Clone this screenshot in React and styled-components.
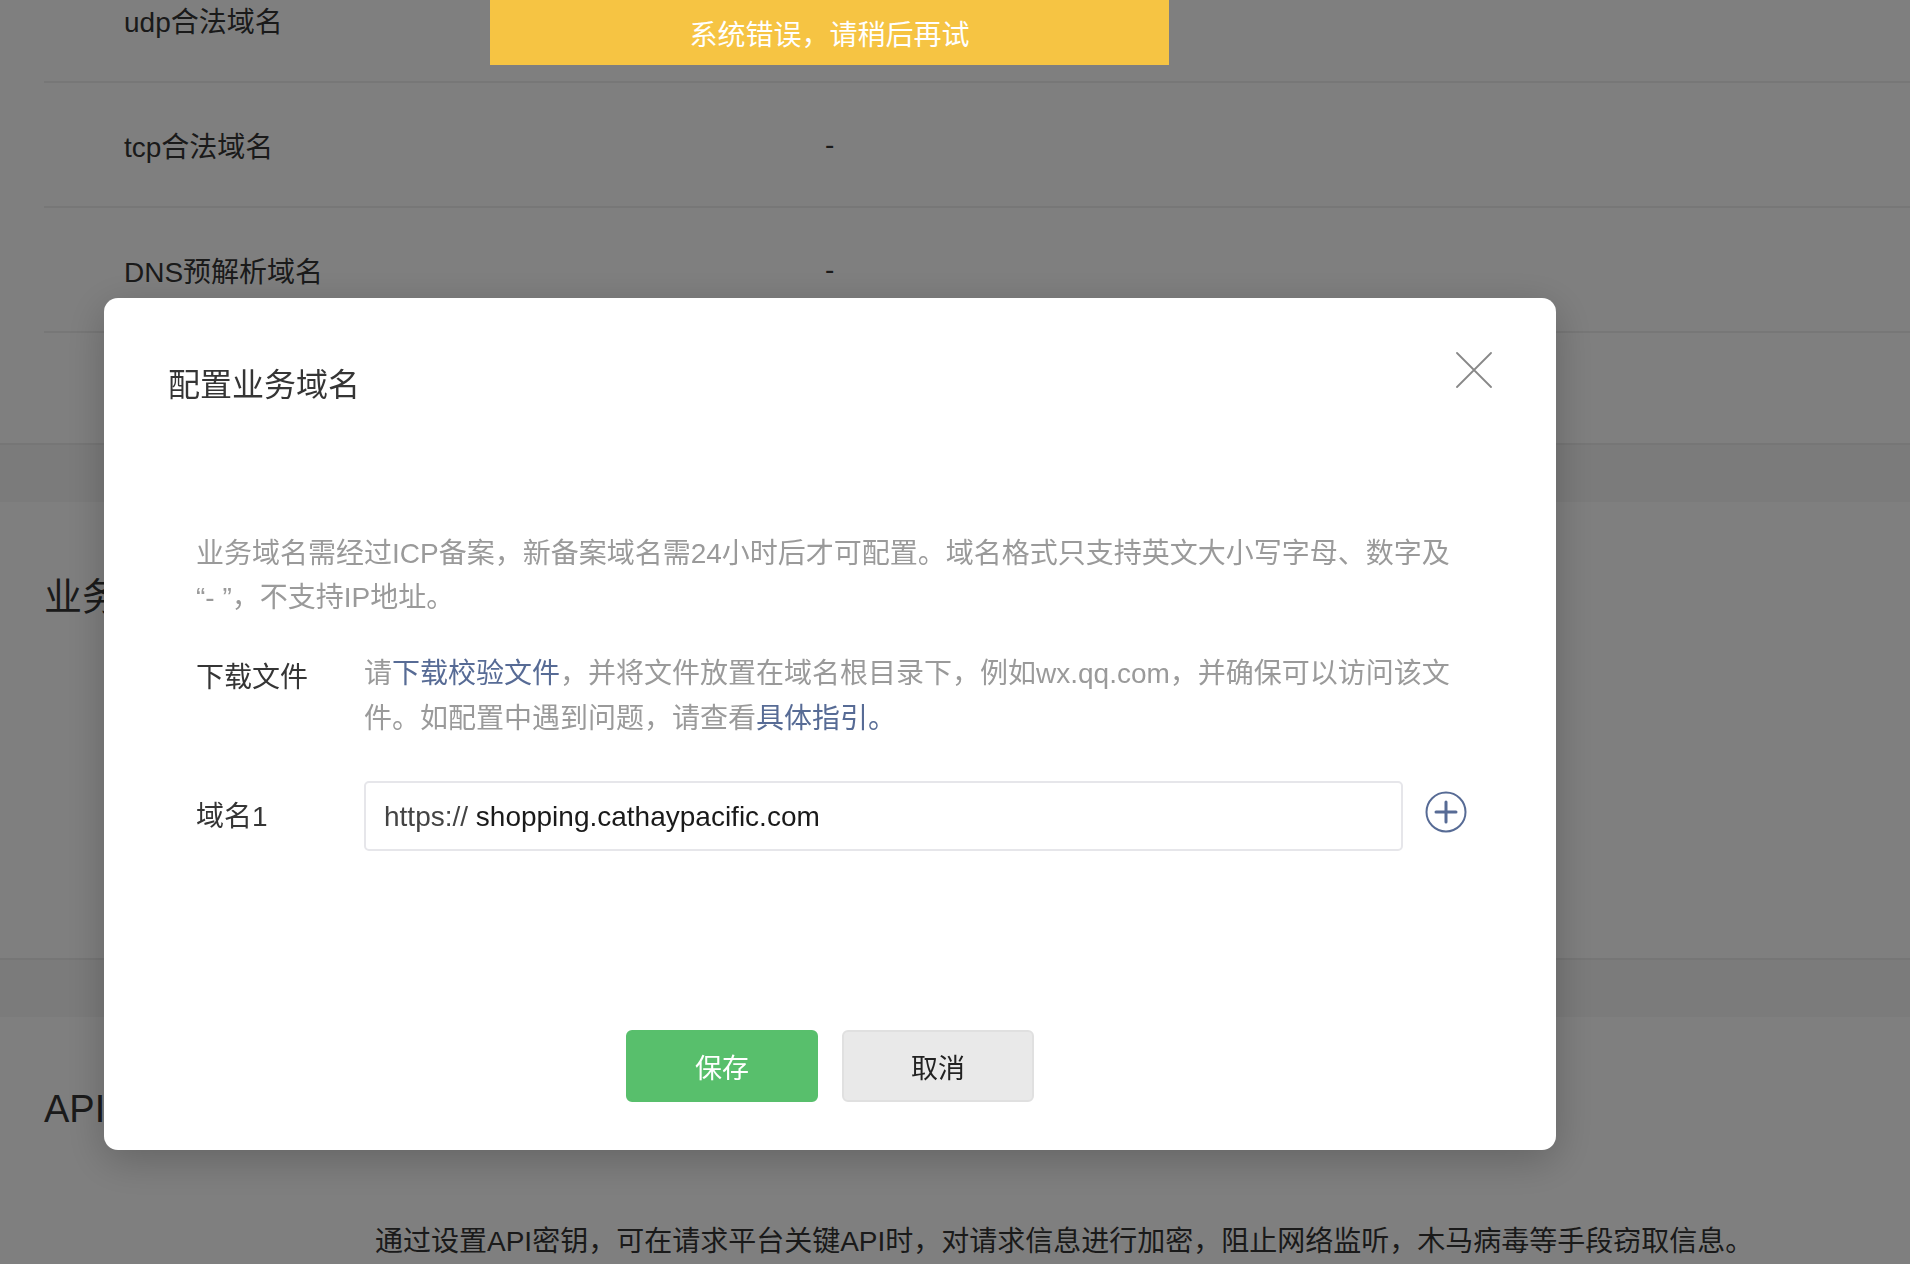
import React from "react";
import styled, { createGlobalStyle } from "styled-components";

const GlobalStyle = createGlobalStyle`
  html, body {
    margin: 0;
    padding: 0;
  }
  body {
    background: #f6f6f6;
    font-family: "Liberation Sans", "Noto Sans CJK SC", sans-serif;
    color: #353535;
    overflow: hidden;
  }
`;

const FONT = `"Liberation Sans", "Noto Sans CJK SC", sans-serif`;

/* page behind the dialog, scrolled down a bit */

const Page = styled.div`
  margin-top: -42px;
  min-height: 1320px;
`;

const Card = styled.section`
  background: #ffffff;
  border-bottom: 2px solid #ececec;
  margin-bottom: ${(p) => p.$gap || 0}px;
  min-height: ${(p) => p.$height || 0}px;
  box-sizing: border-box;
`;

const InfoRow = styled.div`
  display: flex;
  align-items: center;
  height: ${(p) => (p.$last ? 110 : 125)}px;
  margin-left: 44px;
  padding-left: 80px;
  border-bottom: ${(p) => (p.$last ? "none" : "2px solid #eeeeee")};
  box-sizing: border-box;
  font-size: 28px;
`;

const RowLabel = styled.div`
  width: 701px;
  color: #353535;
`;

const RowValue = styled.div`
  color: #353535;
`;

const SectionTitle = styled.h2`
  margin: 0;
  padding: ${(p) => p.$top}px 0 0 44px;
  font-size: 38px;
  line-height: 52px;
  font-weight: 400;
  color: #353535;
`;

const SectionDesc = styled.p`
  margin: 0;
  padding: 87px 0 0 375px;
  font-size: 28px;
  line-height: 40px;
  color: #353535;
`;

/* dialog */

const Mask = styled.div`
  position: fixed;
  inset: 0;
  background: rgba(0, 0, 0, 0.5);
  z-index: 10;
`;

const Dialog = styled.div`
  position: absolute;
  left: 104px;
  top: 298px;
  width: 1452px;
  height: 852px;
  background: #ffffff;
  border-radius: 14px;
  box-shadow: 0 10px 40px rgba(0, 0, 0, 0.22);
  display: flex;
  flex-direction: column;
  box-sizing: border-box;
  padding-bottom: 48px;
`;

const DialogHead = styled.div`
  display: flex;
  justify-content: space-between;
  align-items: flex-start;
  padding: 54px 64px 0;
`;

const DialogTitle = styled.h3`
  margin: 11px 0 0;
  font-size: 32px;
  line-height: 44px;
  font-weight: 400;
  color: #353535;
`;

const CloseButton = styled.button`
  width: 36px;
  height: 36px;
  padding: 0;
  border: none;
  background: transparent;
  cursor: pointer;
  display: flex;
`;

const DialogBody = styled.div`
  padding: 125px 92px 0;
  display: flex;
  flex-direction: column;
`;

const Notice = styled.p`
  margin: 0 0 31px;
  font-size: 28px;
  line-height: 44px;
  color: #9a9a9a;
`;

const FormRow = styled.div`
  display: flex;
  align-items: ${(p) => p.$align || "flex-start"};
  margin-bottom: ${(p) => p.$gap || 0}px;
`;

const FormLabel = styled.label`
  width: 168px;
  flex-shrink: 0;
  font-size: 28px;
  line-height: 45px;
  color: #353535;
  padding-top: ${(p) => p.$offset || 0}px;
`;

const FormText = styled.div`
  flex: 1;
  font-size: 28px;
  line-height: 45px;
  color: #9a9a9a;
`;

const Link = styled.a`
  color: #576b95;
  text-decoration: none;
  cursor: pointer;
`;

const InputBox = styled.div`
  width: 1039px;
  height: 70px;
  flex-shrink: 0;
  box-sizing: border-box;
  border: 2px solid #e6e6ea;
  border-radius: 5px;
  display: flex;
  align-items: center;
  padding: 2px 18px 0;
  font-size: 28px;
`;

const Prefix = styled.span`
  color: #444444;
  white-space: pre;
`;

const Field = styled.input`
  flex: 1;
  min-width: 0;
  border: none;
  outline: none;
  padding: 0;
  font-family: ${FONT};
  font-size: 28px;
  color: #1a1a1a;
  background: transparent;
`;

const AddButton = styled.button`
  width: 42px;
  height: 42px;
  flex-shrink: 0;
  margin: 0 0 8px 22px;
  padding: 0;
  border: none;
  background: transparent;
  cursor: pointer;
  display: flex;
`;

const Actions = styled.div`
  margin-top: auto;
  display: flex;
  justify-content: center;
  gap: 24px;
`;

const Button = styled.button`
  width: 192px;
  height: 72px;
  border-radius: 6px;
  font-family: ${FONT};
  font-size: 27px;
  cursor: pointer;
  box-sizing: border-box;
  border: 2px solid ${(p) => (p.$primary ? "#58bf6c" : "#e0e0e0")};
  background: ${(p) => (p.$primary ? "#58bf6c" : "#e9e9e9")};
  color: ${(p) => (p.$primary ? "#ffffff" : "#222222")};
`;

const Toast = styled.div`
  position: fixed;
  top: 0;
  left: 490px;
  width: 679px;
  height: 65px;
  background: #f6c443;
  color: #ffffff;
  font-size: 28px;
  display: flex;
  align-items: center;
  justify-content: center;
  z-index: 20;
`;

const CloseIcon = () => (
  <svg width="36" height="36" viewBox="0 0 36 36">
    <path
      d="M1 1 L35 35 M35 1 L1 35"
      stroke="#888888"
      strokeWidth="1.8"
      strokeLinecap="round"
      fill="none"
    />
  </svg>
);

const PlusIcon = () => (
  <svg width="42" height="42" viewBox="0 0 42 42">
    <circle cx="21" cy="21" r="19.5" stroke="#576b95" strokeWidth="2" fill="none" />
    <path
      d="M11 21 H31 M21 11 V31"
      stroke="#576b95"
      strokeWidth="3"
      strokeLinecap="round"
    />
  </svg>
);

const rows = [
  { label: "udp合法域名", value: "-" },
  { label: "tcp合法域名", value: "-" },
  { label: "DNS预解析域名", value: "-" },
  { label: "", value: "" },
];

export default function App() {
  return (
    <>
      <GlobalStyle />
      <Page>
        <Card $gap={57}>
          {rows.map((r, i) => (
            <InfoRow key={i} $last={i === rows.length - 1}>
              <RowLabel>{r.label}</RowLabel>
              <RowValue>{r.value}</RowValue>
            </InfoRow>
          ))}
        </Card>
        <Card $gap={57} $height={458}>
          <SectionTitle $top={69}>业务域名</SectionTitle>
        </Card>
        <Card $height={400}>
          <SectionTitle $top={66}>API密钥</SectionTitle>
          <SectionDesc>
            通过设置API密钥，可在请求平台关键API时，对请求信息进行加密，阻止网络监听，木马病毒等手段窃取信息。
          </SectionDesc>
        </Card>
      </Page>

      <Mask>
        <Dialog>
          <DialogHead>
            <DialogTitle>配置业务域名</DialogTitle>
            <CloseButton aria-label="关闭">
              <CloseIcon />
            </CloseButton>
          </DialogHead>
          <DialogBody>
            <Notice>
              业务域名需经过ICP备案，新备案域名需24小时后才可配置。域名格式只支持英文大小写字母、数字及
              <br />
              “- ”，不支持IP地址。
            </Notice>
            <FormRow $gap={40}>
              <FormLabel $offset={4}>下载文件</FormLabel>
              <FormText>
                请<Link>下载校验文件</Link>，并将文件放置在域名根目录下，例如wx.qq.com，并确保可以访问该文件。如配置中遇到问题，请查看
                <Link>具体指引。</Link>
              </FormText>
            </FormRow>
            <FormRow $align="center">
              <FormLabel>域名1</FormLabel>
              <InputBox>
                <Prefix>https:// </Prefix>
                <Field readOnly value="shopping.cathaypacific.com" />
              </InputBox>
              <AddButton aria-label="添加">
                <PlusIcon />
              </AddButton>
            </FormRow>
          </DialogBody>
          <Actions>
            <Button $primary>保存</Button>
            <Button>取消</Button>
          </Actions>
        </Dialog>
      </Mask>
      <Toast>系统错误，请稍后再试</Toast>
    </>
  );
}
